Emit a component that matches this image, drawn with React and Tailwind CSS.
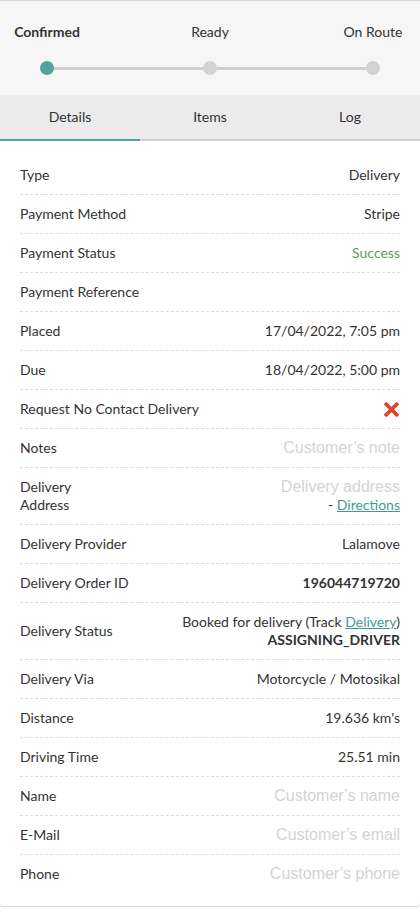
const steps = [
  { label: "Confirmed", done: true },
  { label: "Ready", done: false },
  { label: "On Route", done: false },
]

const tabs = ["Details", "Items", "Log"]

const Placeholder = ({ children }) => (
  <span className="text-[16px] text-[#d3d3d3]" style={{ fontFamily: '"Liberation Sans", Arial, sans-serif' }}>
    {children}
  </span>
)

const CrossMark = () => (
  <svg width="17" height="17" viewBox="0 0 17 17" className="block">
    <path d="M2 2 L15 15 M15 2 L2 15" stroke="#e2412c" strokeWidth="3.8" strokeLinecap="butt" />
  </svg>
)

const rows = [
  { label: "Type", value: "Delivery" },
  { label: "Payment Method", value: "Stripe" },
  { label: "Payment Status", value: <span className="text-[#5a9e58]">Success</span> },
  { label: "Payment Reference", value: "" },
  { label: "Placed", value: "17/04/2022, 7:05 pm" },
  { label: "Due", value: "18/04/2022, 5:00 pm" },
  { label: "Request No Contact Delivery", value: <CrossMark /> },
  { label: "Notes", value: <Placeholder>Customer’s note</Placeholder> },
  {
    label: "Delivery Address",
    narrow: true,
    value: (
      <div className="flex flex-col items-end">
        <Placeholder>Delivery address</Placeholder>
        <span>
          -{" "}
          <a href="#" className="text-[#3f9b91] underline">
            Directions
          </a>
        </span>
      </div>
    ),
  },
  { label: "Delivery Provider", value: "Lalamove" },
  { label: "Delivery Order ID", value: <span className="font-bold">196044719720</span> },
  {
    label: "Delivery Status",
    value: (
      <div className="flex flex-col items-end">
        <span>
          Booked for delivery (Track{" "}
          <a href="#" className="text-[#3f9b91] underline">
            Delivery
          </a>
          )
        </span>
        <span className="font-bold">ASSIGNING_DRIVER</span>
      </div>
    ),
  },
  { label: "Delivery Via", value: "Motorcycle / Motosikal" },
  { label: "Distance", value: "19.636 km's" },
  { label: "Driving Time", value: "25.51 min" },
  { label: "Name", value: <Placeholder>Customer’s name</Placeholder> },
  { label: "E-Mail", value: <Placeholder>Customer’s email</Placeholder> },
  { label: "Phone", value: <Placeholder>Customer’s phone</Placeholder> },
]

export default function App() {
  return (
    <div
      className="w-[420px] bg-white text-[#333] border-t border-b border-[#d6d6d6] rounded-b-[4px] overflow-hidden"
      style={{ fontFamily: 'Lato, "Open Sans", sans-serif' }}
    >
      {/* status stepper */}
      <div className="bg-[#f6f6f6] pt-[22px] pb-5">
        <div className="grid grid-cols-[94px_1fr_94px] text-[14px] leading-[18px]">
          {steps.map((s, i) => (
            <div key={s.label} className={i === 0 ? "text-center font-bold" : "text-center"}>
              {s.label}
            </div>
          ))}
        </div>
        <div className="flex items-center px-[40px] mt-5">
          <div className="h-[14px] w-[14px] rounded-full bg-[#4fa39b]" />
          <div className="h-[3px] flex-1 bg-[#cfcfcf]" />
          <div className="h-[14px] w-[14px] rounded-full bg-[#d2d2d2]" />
          <div className="h-[3px] flex-1 bg-[#cfcfcf]" />
          <div className="h-[14px] w-[14px] rounded-full bg-[#d2d2d2]" />
        </div>
      </div>

      {/* tabs */}
      <div className="grid grid-cols-3 bg-[#ebebeb] text-[14px]">
        {tabs.map((t, i) => (
          <div
            key={t}
            className={
              i === 0
                ? "h-[46px] pb-[1px] flex items-center justify-center border-b-2 border-[#4fa39b]"
                : "h-[46px] pb-[1px] flex items-center justify-center border-b-2 border-[#d0d0d0]"
            }
          >
            {t}
          </div>
        ))}
      </div>

      {/* details */}
      <div className="px-5 pt-[15px] pb-[13px] text-[14px] leading-[18px]">
        {rows.map((r, i) => (
          <div
            key={r.label}
            className={
              i === rows.length - 1
                ? "flex items-center justify-between gap-4 py-[10px]"
                : "flex items-center justify-between gap-4 py-[10px] border-b border-dashed border-[#dcdcdc]"
            }
          >
            <div className={r.narrow ? "max-w-[80px]" : "shrink-0"}>{r.label}</div>
            <div className="text-right">{r.value}</div>
          </div>
        ))}
      </div>
    </div>
  )
}
